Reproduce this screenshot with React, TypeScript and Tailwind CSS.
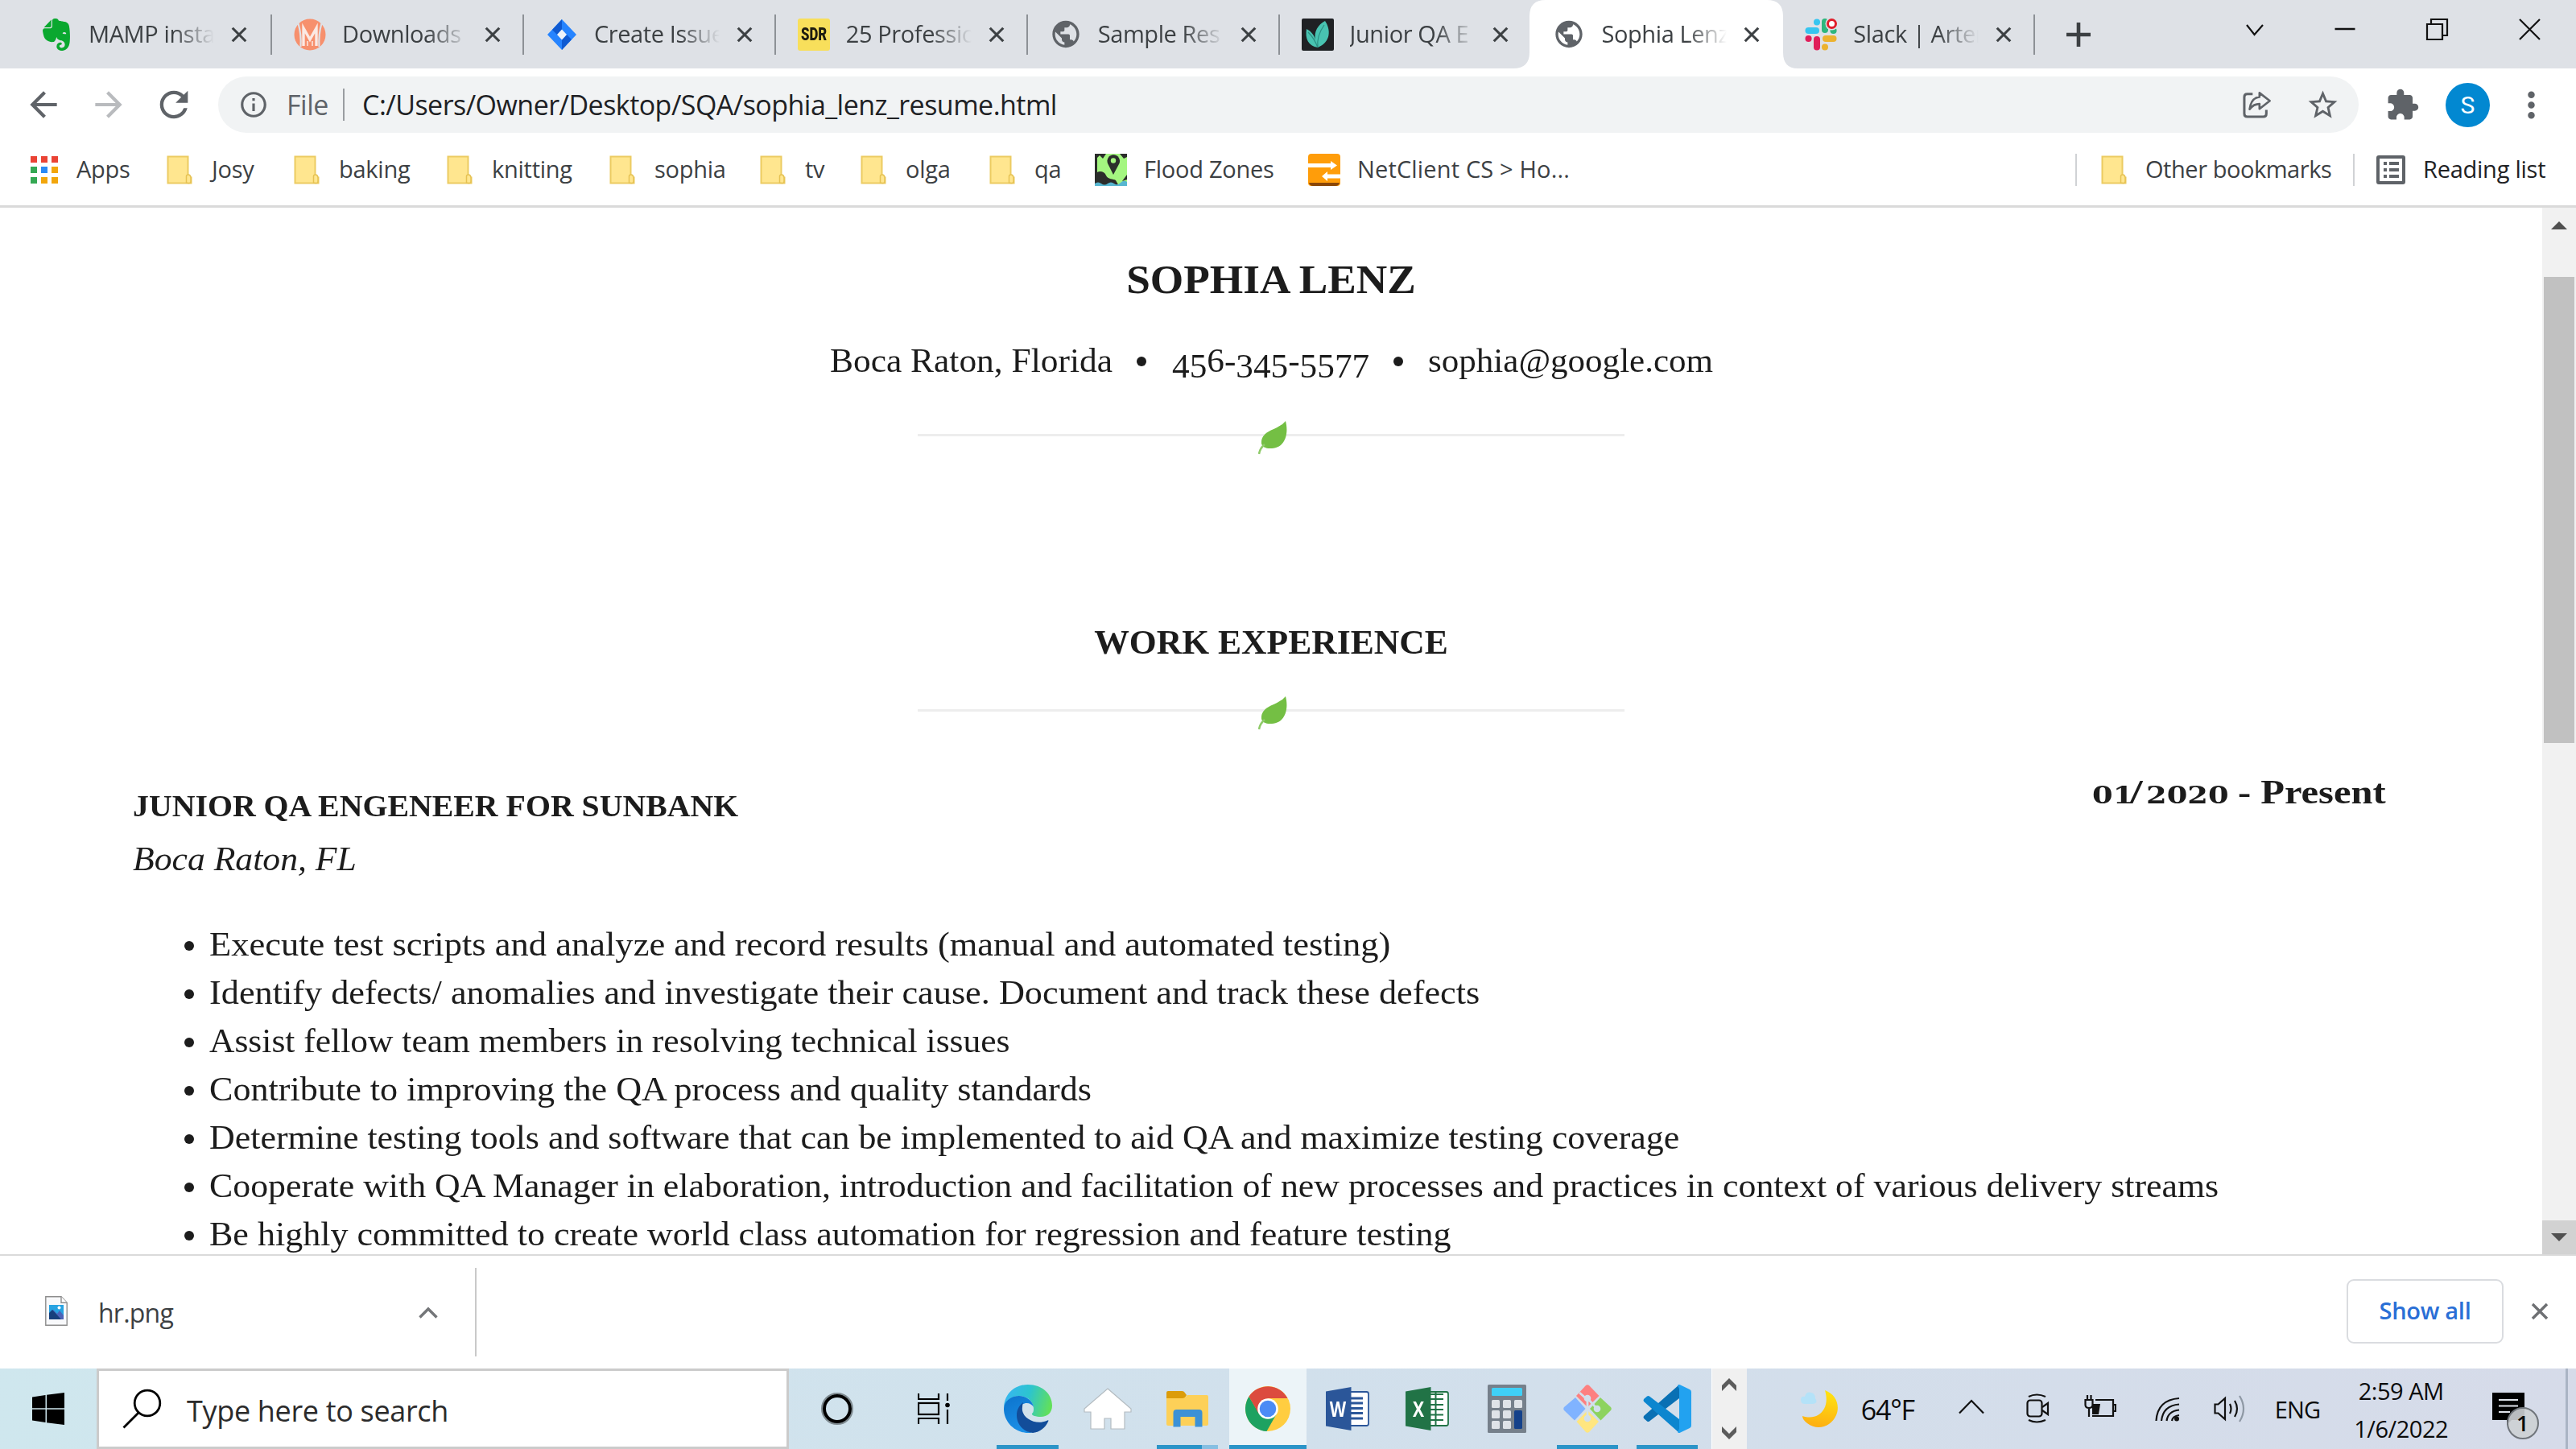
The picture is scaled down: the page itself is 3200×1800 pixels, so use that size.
import type { ReactNode } from 'react';
import {
  MdArrowBack,
  MdArrowForward,
  MdExtension,
  MdInfoOutline,
  MdMoreVert,
  MdPublic,
  MdRefresh,
  MdStarBorder,
} from 'react-icons/md';
import { SiEvernote } from 'react-icons/si';

function Cross({ className }: { className: string }) {
  return (
    <svg className={className} viewBox="0 0 24 24" fill="none" stroke="currentColor" strokeWidth="3.400">
      <path d="M3 3l18 18M21 3L3 21" />
    </svg>
  );
}

/* ---------- Tab favicons ---------- */

function MagentoIcon() {
  return (
    <svg className="size-10" viewBox="0 0 40 40">
      <circle cx="20" cy="20" r="19.5" fill="#f7906d" />
      <path d="M5.500 6q4 14 3 29M34.500 6q-4 14-3 29" stroke="#dee1e6" strokeWidth="2.200" fill="none" />
      <path d="M12 34V12l8 14 8-14v22" stroke="#fbe9e3" strokeWidth="3.400" fill="none" />
      <path d="M17 34v-6M23 34v-6" stroke="#fbe9e3" strokeWidth="1.500" fill="none" />
    </svg>
  );
}

function JiraIcon() {
  return (
    <svg className="size-10" viewBox="0 0 40 40">
      <path d="M20 1L38 20 20 39 2 20z" fill="#2684ff" />
      <path d="M20 1v13l-6 6-6-6z" fill="#0f5ad1" />
      <path d="M20 39V26l6-6 6 6z" fill="#0f5ad1" />
      <path d="M20 13.500l6 6.500-6 6.500-6-6.500z" fill="#eef3fa" />
    </svg>
  );
}

function SdrIcon() {
  return (
    <div className="flex size-10 items-center justify-center rounded-[3px] bg-[#f8df5b]">
      <span className="scale-x-[.76] font-['Roboto',sans-serif] text-[22px] leading-none font-black text-[#1f1d10]">SDR</span>
    </div>
  );
}

function LeafIcon() {
  return (
    <svg className="size-10" viewBox="0 0 40 40">
      <rect width="40" height="40" rx="2" fill="#1f2124" />
      <path d="M20 36C8 34 4 25 6 13c6 3 10 8 11 14C15 16 20 8 29 3c7 10 8 26-9 33z" fill="#48c3b1" />
      <path d="M20 36c-1-8 1-18 8-28M20 36C17 28 13 22 8 17" stroke="#2c8f83" strokeWidth="1.200" fill="none" />
    </svg>
  );
}

function SlackIcon() {
  return (
    <svg className="size-10" viewBox="0 0 40 40">
      <g strokeWidth="8" strokeLinecap="round">
        <path d="M4.500 15H14" stroke="#36c5f0" />
        <path d="M15 4.500v0.100" stroke="#36c5f0" />
        <path d="M25 4v10" stroke="#2eb67d" />
        <path d="M35.500 15h0.100" stroke="#2eb67d" />
        <path d="M15 26v9.500" stroke="#e01e5a" />
        <path d="M4.500 25h0.100" stroke="#e01e5a" />
        <path d="M26 25h9.500" stroke="#ecb22e" />
        <path d="M25 35.500v0.100" stroke="#ecb22e" />
      </g>
      <circle cx="33.500" cy="6.500" r="8" fill="#dee1e6" />
      <circle cx="33.500" cy="6.500" r="5" fill="#fff" stroke="#e01e2a" strokeWidth="3" />
    </svg>
  );
}

/* ---------- Bookmark icons ---------- */

function FolderIcon() {
  return (
    <svg className="h-9 w-8" viewBox="0 0 32 36">
      <path d="M1.500 1.500h25v26h4v7h-29z" fill="#ffe68f" stroke="#eccb62" strokeWidth="2" />
      <path d="M24.500 34V26q0-2 2.500-2t3 3.500v5q0 2-2.500 2z" fill="#ffe68f" stroke="#e6c253" strokeWidth="1.500" />
    </svg>
  );
}

const appColors = [
  'bg-[#ea4335]', 'bg-[#ea4335]', 'bg-[#ea4335]',
  'bg-[#34a853]', 'bg-[#2b8af5]', 'bg-[#f2a60c]',
  'bg-[#34a853]', 'bg-[#f2a60c]', 'bg-[#f2a60c]',
];

function AppsIcon() {
  return (
    <div className="grid w-[34px] grid-cols-3 gap-[5px]">
      {appColors.map((c, i) => (
        <span key={i} className={`h-2 ${c}`} />
      ))}
    </div>
  );
}

function FloodIcon() {
  return (
    <svg className="size-10" viewBox="0 0 40 40">
      <rect width="40" height="40" fill="#a4f680" />
      <path d="M0 0h14l-4 6-4-4-6 6zM40 0h-9l5 6 4-2z" fill="#2b2d2b" />
      <path d="M0 26c3-6 12-5 14 1 2 5 9 4 12 6l4 7H0z" fill="#2b2d2b" />
      <path d="M0 4l3-2v26H0zM40 14v12l-6 8 6-2z" fill="#2b2d2b" />
      <path d="M0 40v-3q4-3 8 0t8 0 8 0 8-1 8-1v5z" fill="#57b6d0" />
      <path d="M23 26L16 12a7.800 7.800 0 1 1 14.500 0z" fill="#2b2d2b" />
      <circle cx="23" cy="8.500" r="3.200" fill="#a4f680" />
    </svg>
  );
}

function NetClientIcon() {
  return (
    <svg className="size-10" viewBox="0 0 40 40">
      <rect width="40" height="40" rx="4" fill="#ff9d0a" />
      <path d="M1 36h38q-1 4-5 4H6q-4 0-5-4z" fill="#8a4607" />
      <path d="M0 12h28V9l8 5.500-8 5.500v-3H0z" fill="#fff" />
      <path d="M40 25.500H24V22l-7 6 7 6v-3.500h16z" fill="#fff" />
    </svg>
  );
}

function ReadingListIcon() {
  return (
    <svg className="size-9" viewBox="0 0 36 36" fill="none" stroke="#5f6368">
      <rect x="2" y="2" width="32" height="32" rx="1" strokeWidth="4" />
      <path d="M9 10h4M9 18h4M9 26h4M16 10h12M16 18h12M16 26h12" strokeWidth="4" />
    </svg>
  );
}

/* ---------- Tab strip ---------- */

const tabs: { title: string; icon: ReactNode; active?: boolean; nextActive?: boolean }[] = [
  { title: 'MAMP insta', icon: <SiEvernote className="size-10 text-[#0aa82f]" /> },
  { title: 'Downloads', icon: <MagentoIcon /> },
  { title: 'Create Issue', icon: <JiraIcon /> },
  { title: '25 Professio', icon: <SdrIcon /> },
  { title: 'Sample Res', icon: <MdPublic className="size-[43px] text-[#5f6368]" /> },
  { title: 'Junior QA E', icon: <LeafIcon />, nextActive: true },
  { title: 'Sophia Lenz', icon: <MdPublic className="size-[43px] text-[#5f6368]" />, active: true },
  { title: 'Slack | Arten', icon: <SlackIcon /> },
];

function TabStrip() {
  return (
    <div className="flex h-[85px] bg-[#dee1e6] pl-6 text-[#3c4043]">
      {tabs.map((t) => (
        <div key={t.title} className="relative flex h-full w-[312.900px] items-center pl-[26px] first:w-[315px]">
          {t.active && (
            <svg className="absolute top-0 -left-[23px] h-[85px] w-[353px]" viewBox="0 0 353 85">
              <path d="M0 85Q20 85 20 65V20Q20 0 40 0H315Q335 0 335 20V65Q335 85 353 85z" fill="#fff" />
            </svg>
          )}
          <div className="relative flex size-10 shrink-0 items-center justify-center">{t.icon}</div>
          <div className="relative mb-px ml-5 w-[156px] overflow-hidden text-[29px] leading-[40px] tracking-[-0.4px] whitespace-nowrap [mask-image:linear-gradient(to_right,black_68%,transparent_100%)]">
            {t.title}
          </div>
          <Cross className="relative ml-5 size-[22px] shrink-0" />
          {!t.active && !t.nextActive && <span className="mr-px ml-auto h-[50px] w-0.5 bg-[#8d9196]" />}
        </div>
      ))}
      <div className="flex w-[105px] items-center justify-center">
        <svg className="size-[30px]" viewBox="0 0 30 30" stroke="currentColor" strokeWidth="4.600">
          <path d="M15 0v30M0 15h30" />
        </svg>
      </div>
      <svg className="ml-auto h-[74px] w-[410px]" viewBox="0 0 410 74" fill="none" stroke="#111" strokeWidth="2.200">
        <path d="M1 31l9.500 12L21 31" />
        <path d="M110.500 36h25" strokeWidth="2.500" />
        <path d="M225 30h19v19h-19zM230 29v-5h20v20h-5" />
        <path d="M340 24l25 25M365 24l-25 25" />
      </svg>
    </div>
  );
}

/* ---------- Address bar ---------- */

function Toolbar() {
  return (
    <div className="flex h-[90px] items-center text-[#5f6368]">
      <MdArrowBack className="ml-[29px] size-[50px]" />
      <MdArrowForward className="ml-[31px] size-[50px] text-[#b9bbbe]" />
      <MdRefresh className="ml-[30px] size-[52px]" />
      <div className="ml-[29px] flex h-[70px] w-[2659px] items-center rounded-full bg-[#f1f3f4] pl-[25px]">
        <MdInfoOutline className="size-[38px]" />
        <span className="ml-[22px] w-[70px] text-[34px] tracking-[-0.5px]">File</span>
        <span className="h-10 w-0.5 bg-[#9a9da1]" />
        <span className="ml-[22px] text-[34px] tracking-[-0.54px] text-[#202124]">
          C:/Users/Owner/Desktop/SQA/sophia_lenz_resume.html
        </span>
        <svg className="ml-auto h-[34px] w-[36px]" viewBox="0 0 38 36" fill="none" stroke="#5f6368" strokeWidth="3.200">
          <path d="M13 4H6q-4 0-4 4v22q0 4 4 4h21q4 0 4-4v-5" />
          <path d="M22 2.500L35.500 13 22 23.500V17q-8 0-13 7 2-15 13-16z" strokeLinejoin="round" strokeWidth="2.800" />
        </svg>
        <MdStarBorder className="mr-[23px] ml-[42px] size-[43px]" />
      </div>
      <MdExtension className="ml-[33px] size-[43px]" />
      <span className="ml-[32px] flex size-[55px] items-center justify-center rounded-full bg-[#0288d1] font-['Roboto',sans-serif] text-[30px] text-white">
        S
      </span>
      <MdMoreVert className="ml-[26px] size-[51px]" />
    </div>
  );
}

/* ---------- Bookmarks bar ---------- */

const bookmarks: { label: string; width: string; icon: ReactNode; slot?: string }[] = [
  { label: 'Apps', width: 'w-[169px]', icon: <AppsIcon />, slot: 'w-[57px]' },
  { label: 'Josy', width: 'w-[158px]', icon: <FolderIcon /> },
  { label: 'baking', width: 'w-[190px]', icon: <FolderIcon /> },
  { label: 'knitting', width: 'w-[202px]', icon: <FolderIcon /> },
  { label: 'sophia', width: 'w-[187px]', icon: <FolderIcon /> },
  { label: 'tv', width: 'w-[125px]', icon: <FolderIcon /> },
  { label: 'olga', width: 'w-[160px]', icon: <FolderIcon /> },
  { label: 'qa', width: 'w-[131px]', icon: <FolderIcon /> },
  { label: 'Flood Zones', width: 'w-[265px]', icon: <FloodIcon />, slot: 'w-[61px]' },
  { label: 'NetClient CS > Ho...', width: 'w-[340px] tracking-[0.16px]', icon: <NetClientIcon />, slot: 'w-[61px]' },
];

function BookmarksBar() {
  return (
    <div className="flex h-[83px] items-center border-b-[3px] border-[#dadada] pb-[9px] pl-[38px] text-[29px] leading-[40px] tracking-[-0.25px] whitespace-nowrap text-[#3c4043]">
      {bookmarks.map((b) => (
        <div key={b.label} className={`flex items-center ${b.width}`}>
          <span className={`shrink-0 ${b.slot ?? 'w-14'}`}>{b.icon}</span>
          <span className="-mt-0.5">{b.label}</span>
        </div>
      ))}
      <div className="ml-auto flex h-10 items-center">
        <span className="h-10 w-0.5 bg-[#d0d2d5]" />
        <span className="ml-[30px] w-[55px]"><FolderIcon /></span>
        <span className="-mt-0.5 w-[258px] tracking-[-0.45px]">Other bookmarks</span>
        <span className="h-10 w-0.5 bg-[#d0d2d5]" />
        <span className="ml-[27px] w-[58px]"><ReadingListIcon /></span>
        <span className="-mt-0.5 w-[190px] text-[#202124]">Reading list</span>
      </div>
    </div>
  );
}

/* ---------- Résumé page ---------- */

function LeafDivider() {
  return (
    <div className="mx-auto flex h-[43px] w-[878px] items-start">
      <span className="mt-[17px] h-[3px] flex-1 bg-[#ededed]" />
      <svg className="h-[43px] w-9 shrink-0" viewBox="0 0 36 43">
        <path d="M0 18.500h36" stroke="#ededed" strokeWidth="3" />
        <path d="M34 1C38 16 34 34 17 35 9 35.500 5 33 4 29 3 15 19 12 25 8q6-3 9-7z" fill="#74bf44" />
        <path d="M1 42q1-7 7-12" stroke="#8fcb69" strokeWidth="2.500" fill="none" />
      </svg>
      <span className="mt-[17px] h-[3px] w-[419px] bg-[#ededed]" />
    </div>
  );
}

/** Digits that hang below the baseline, as text figures do. */
function Low({ children }: { children: string }) {
  return <span className="align-[-0.16em] leading-[0]">{children}</span>;
}

const duties = [
  { text: 'Execute test scripts and analyze and record results (manual and automated testing)', stretch: 'scale-x-[1.06]' },
  { text: 'Identify defects/ anomalies and investigate their cause. Document and track these defects', stretch: 'scale-x-[1.054]' },
  { text: 'Assist fellow team members in resolving technical issues', stretch: 'scale-x-[1.036]' },
  { text: 'Contribute to improving the QA process and quality standards', stretch: 'scale-x-[1.051]' },
  { text: 'Determine testing tools and software that can be implemented to aid QA and maximize testing coverage', stretch: 'scale-x-[1.046]' },
  { text: 'Cooperate with QA Manager in elaboration, introduction and facilitation of new processes and practices in context of various delivery streams', stretch: 'scale-x-[1.044]' },
  { text: 'Be highly committed to create world class automation for regression and feature testing', stretch: 'scale-x-[1.048]' },
];

function Resume() {
  return (
    <main className="h-[1300px] flex-1 overflow-hidden bg-white pt-[59px] font-['Liberation_Serif',serif] text-[42px] leading-[60px] whitespace-nowrap text-[#1c1c1c]">
      <h1 className="scale-x-[1.065] text-center text-[50px] font-bold">SOPHIA LENZ</h1>
      <p className="mt-[41px] flex items-center pl-[1031px]">
        <span className="flex w-[381px]"><span className="origin-left scale-x-[1.034]">Boca Raton, Florida</span></span>
        <span className="mt-0.5 size-3 rounded-full bg-[#1c1c1c]" />
        <span className="ml-[32px] flex w-[275px]">
          <span className="origin-left scale-x-[1.03]">
            <Low>45</Low>6-<Low>345</Low>-<Low>5577</Low>
          </span>
        </span>
        <span className="mt-0.5 size-3 rounded-full bg-[#1c1c1c]" />
        <span className="ml-[31px] origin-left scale-x-[1.025]">sophia@google.com</span>
      </p>
      <div className="mt-[44px]"><LeafDivider /></div>
      <h2 className="mt-[203px] scale-x-[1.038] text-center font-bold">WORK EXPERIENCE</h2>
      <div className="mt-[36px]"><LeafDivider /></div>
      <section className="mt-[46px] pl-[165px]">
        <header className="flex justify-between pr-[193px]">
          <div className="pt-[18px]">
            <h3 className="origin-left scale-x-[1.048] text-[38px] font-bold">JUNIOR QA ENGENEER FOR SUNBANK</h3>
            <p className="mt-1.5 flex italic"><span className="origin-left scale-x-[1.04]">Boca Raton, FL</span></p>
          </div>
          <p className="mt-px flex h-[60px] w-[366px] items-baseline font-bold">
            <span className="w-[47px] origin-left scale-x-[1.27] font-['DejaVu_Serif',serif] text-[29px]">01</span>
            <span className="w-[20px] origin-left scale-x-[1.35]">/</span>
            <span className="w-[114px] origin-left scale-x-[1.27] font-['DejaVu_Serif',serif] text-[29px]">2020</span>
            <span className="origin-left scale-x-[1.155]">- Present</span>
          </p>
        </header>
        <ul className="mt-[46px]">
          {duties.map((d) => (
            <li key={d.text} className="flex h-[60px] items-center">
              <span className="mt-[3px] ml-[64px] size-3 rounded-full bg-[#1c1c1c]" />
              <span className={`ml-[19px] origin-left ${d.stretch}`}>{d.text}</span>
            </li>
          ))}
        </ul>
      </section>
    </main>
  );
}

function Scrollbar() {
  return (
    <aside className="flex h-[1300px] w-[42px] flex-col items-center bg-[#f1f1f1]">
      <svg className="mt-[17px] h-2.5 w-5" viewBox="0 0 20 10"><path d="M0 10L10 0l10 10z" fill="#505050" /></svg>
      <span className="mt-[59px] h-[579px] w-[38px] bg-[#c1c1c1]" />
      <span className="mt-auto flex h-[42px] w-full items-center justify-center bg-[#d2d2d2]">
        <svg className="h-2.5 w-5" viewBox="0 0 20 10"><path d="M0 0l10 10L20 0z" fill="#505050" /></svg>
      </span>
    </aside>
  );
}

/* ---------- Download shelf ---------- */

function DownloadShelf() {
  return (
    <div className="flex h-[142px] items-center border-t-2 border-[#dadada] bg-white text-[#3c4043]">
      <svg className="mb-1 ml-14 h-[37px] w-7" viewBox="0 0 28 37">
        <path d="M.8.8H20l7.200 7.500V36.200H.8z" fill="#f8f9fb" stroke="#8d8d8d" strokeWidth="1.400" />
        <path d="M20 .8v7.500h7.200" fill="#fff" stroke="#8d8d8d" strokeWidth="1.400" />
        <rect x="5" y="11" width="18" height="18" fill="#27a3e2" />
        <path d="M5 22l5-5 5 5 3-4 5 6v5H5z" fill="#4c63b8" />
        <path d="M5 21l4-4 11 12H5z" fill="#173f7c" />
        <circle cx="17.500" cy="14.500" r="2" fill="#fff" />
      </svg>
      <span className="mt-0.5 ml-[38px] w-[398px] text-[32px] tracking-[-0.78px]">hr.png</span>
      <svg className="h-[15px] w-6" viewBox="0 0 24 15" fill="none" stroke="#747679" strokeWidth="3.400">
        <path d="M1.500 13.500L12 3l10.500 10.500" />
      </svg>
      <span className="ml-[46px] h-[110px] w-0.5 bg-[#c9c9c9]" />
      <span className="mb-[3px] ml-auto flex h-20 w-[195px] items-center justify-center rounded-[9px] border-2 border-[#dadce0] pb-0.5 text-[29px] font-semibold tracking-[-0.28px] text-[#2a6fd6]">
        Show all
      </span>
      <Cross className="mr-[33px] mb-0.5 ml-[33px] size-6 text-[#6e7073]" />
    </div>
  );
}

/* ---------- Taskbar ---------- */

function EdgeIcon() {
  return (
    <svg className="size-[60px]" viewBox="0 0 60 60">
      <defs>
        <linearGradient id="edgeTop" x1="0" y1="0.300" x2="1" y2="0.500">
          <stop offset="0" stopColor="#37b6f2" />
          <stop offset=".5" stopColor="#2cc4cf" />
          <stop offset="1" stopColor="#62e05a" />
        </linearGradient>
        <linearGradient id="edgeLeft" x1="0" y1="0" x2="0.400" y2="1">
          <stop offset="0" stopColor="#0c73cc" />
          <stop offset="1" stopColor="#1b8fe6" />
        </linearGradient>
      </defs>
      <path d="M0 30C0 12 13 0 30 0c18 0 30 12 30 26 0 9-6 14-14 14-7 0-12-2-11-4 1-1 2-2 2-6C37 20 28 14 19 14 8 14 0 22 0 30z" fill="url(#edgeTop)" />
      <path d="M0 30c0-9 8-16 19-16 9 0 17 6 18 14-3-6-14-8-18 2-4 12 4 26 16 30C16 62 0 48 0 30z" fill="url(#edgeLeft)" />
      <path d="M24 22c-5 4-8 9-8 16 0 12 9 21 20 22 9-1 16-7 19-14 1-2 0-2-2-1-14 6-32-4-30-17 0-2 .4-4 1-6z" fill="#124d9a" />
    </svg>
  );
}

function HomeIcon() {
  return (
    <svg className="h-[53px] w-[60px]" viewBox="0 0 60 53">
      <path d="M30 1L59 26v4h-8v21H34V38h-8v13H9V30H1v-4z" fill="#fff" stroke="#b4bcc1" strokeWidth="1.200" />
    </svg>
  );
}

function ExplorerIcon() {
  return (
    <svg className="h-[45px] w-[54px]" viewBox="0 0 54 45">
      <path d="M1 2q0-2 2-2h17q2 0 3 1l3 4-3 5H1z" fill="#dc9c0a" />
      <path d="M1 9h20q2 0 4-2l2-2h24q2 0 2 2v34q0 2-2 2H3q-2 0-2-2z" fill="#fdd058" />
      <path d="M9.500 44.500V27q0-4 4-4h28q4 0 4 4v17.500H36.500V32h-18v12.500z" fill="#3c91d6" />
    </svg>
  );
}

function ChromeIcon() {
  return (
    <svg className="size-14" viewBox="0 0 56 56">
      <circle cx="28" cy="28" r="28" fill="#ffcd40" />
      <path d="M4.500 12.800A28 28 0 0 0 26.500 56L39 34 28 28 17 34z" fill="#1da261" />
      <path d="M4.500 12.800L16 33 28 15h24.500A28 28 0 0 0 4.500 12.800z" fill="#dc4b3e" />
      <circle cx="28" cy="28" r="12.800" fill="#fff" />
      <circle cx="28" cy="28" r="10.300" fill="#4c8bf5" />
    </svg>
  );
}

function OfficeIcon({ letter, dark, children }: { letter: string; dark: string; children: ReactNode }) {
  return (
    <div className="relative size-[54px]">
      <svg className="size-[54px]" viewBox="0 0 54 54">
        <rect x="28" y="6" width="25" height="42" rx="2.500" fill="#fff" stroke={dark} strokeWidth="1.800" />
        {children}
        <path d="M0 5.500L31.500 0v54L0 48.500z" fill={dark} />
      </svg>
      <span className="absolute inset-y-0 left-0 flex w-[31px] items-center justify-center font-['Open_Sans',sans-serif] text-[27px] font-bold text-white">
        <span className="scale-x-[.78]">{letter}</span>
      </span>
    </div>
  );
}

function CalculatorIcon() {
  return (
    <svg className="h-[60px] w-12" viewBox="0 0 48 60">
      <rect width="48" height="60" rx="1.500" fill="#76808b" />
      <rect x="5" y="4" width="38" height="10" rx="1.500" fill="#3fd0f7" />
      <g fill="#dfe3e8">
        <rect x="5" y="19" width="10" height="10" rx="1.500" />
        <rect x="19" y="19" width="10" height="10" rx="1.500" />
        <rect x="33" y="19" width="10" height="10" rx="1.500" />
        <rect x="5" y="32" width="10" height="10" rx="1.500" />
        <rect x="19" y="32" width="10" height="10" rx="1.500" />
        <rect x="5" y="45" width="10" height="10" rx="1.500" />
        <rect x="19" y="45" width="10" height="10" rx="1.500" />
      </g>
      <rect x="33" y="32" width="10" height="23" rx="1.500" fill="#14418a" />
    </svg>
  );
}

function GitIcon() {
  return (
    <svg className="size-[60px]" viewBox="0 0 60 60">
      <path d="M28 1q2-1.500 4 0l12.500 13-14.500 14-14-14z" fill="#fd8080" />
      <path d="M15 16L1 28q-1.500 2 0 4l13 12.500L27.500 30z" fill="#80b3ff" />
      <path d="M46 16L33 30l13.500 14.500L59 32q1.500-2 0-4z" fill="#8dd35f" />
      <path d="M30 32L16.500 46 28 59q2 1.500 4 0l12-13z" fill="#ffe680" />
      <path d="M20 10l8 7M30 17v24M30 17l11 12" stroke="#d1e0ec" strokeWidth="2.800" />
      <g fill="#d1e0ec">
        <circle cx="30" cy="17" r="4.300" />
        <circle cx="42" cy="30" r="4.300" />
        <circle cx="30" cy="42" r="4.300" />
      </g>
    </svg>
  );
}

function VsCodeIcon() {
  return (
    <svg className="size-[60px]" viewBox="0 0 60 60">
      <path d="M45 0L1 39q-1 1.500 0 3l4 3.500q1.500 1 3 0L45 17z" fill="#0970b4" />
      <path d="M45 60L1 21q-1-1.500 0-3l4-3.500q1.500-1 3 0L45 43z" fill="#0c86cf" />
      <path d="M43 1q1-1.500 3-.8L58 6q2 1 2 3v42q0 2-2 3l-12 5.800q-2 .7-3-.8l2-4V5z" fill="#22a2f0" />
    </svg>
  );
}

const apps: { name: string; icon: ReactNode; bar?: string; active?: boolean; partial?: boolean }[] = [
  { name: 'edge', icon: <EdgeIcon />, bar: 'w-[77px]' },
  { name: 'home', icon: <HomeIcon /> },
  { name: 'explorer', icon: <ExplorerIcon />, bar: 'w-[76px]', partial: true },
  { name: 'chrome', icon: <ChromeIcon />, bar: 'w-24', active: true },
  {
    name: 'word',
    icon: (
      <OfficeIcon letter="W" dark="#2b5699">
        <path d="M31 14h15M31 20h15M31 26.500h15M31 32.500h15M31 39h15" stroke="#2b5699" strokeWidth="2.800" />
      </OfficeIcon>
    ),
  },
  {
    name: 'excel',
    icon: (
      <OfficeIcon letter="X" dark="#217346">
        <path d="M31 9h19M31 15h19M31 22h19M31 28h19M31 34.500h19M31 41h19" stroke="#217346" strokeWidth="1.800" />
        <path d="M37.500 7v40" stroke="#217346" strokeWidth="2" />
        <path d="M49 8v38" stroke="#fff" strokeWidth="4" />
      </OfficeIcon>
    ),
  },
  { name: 'calculator', icon: <CalculatorIcon /> },
  { name: 'git', icon: <GitIcon />, bar: 'w-[76px]' },
  { name: 'code', icon: <VsCodeIcon />, bar: 'w-[76px]' },
];

function Tray() {
  return (
    <div className="flex h-full flex-1 items-center text-[#0b0b0b]">
      <svg className="ml-[66px] h-12 w-12" viewBox="0 0 48 48">
        <defs>
          <linearGradient id="moon" x1="0.600" y1="0" x2="0.400" y2="1">
            <stop offset="0" stopColor="#ffe312" />
            <stop offset="1" stopColor="#fdae12" />
          </linearGradient>
        </defs>
        <path d="M31 1C45 6 50 20 45 32 39 46 22 52 9 42 5 39 3 36 3 33c12 4 22 0 27-9 4-8 3-16 1-23z" fill="url(#moon)" />
        <path d="M6 18q-5 0-5-5t5-4q2-7 8-5 5 1 5 7 4 6-3 7z" fill="#b4e2f8" />
      </svg>
      <span className="mt-0.5 ml-[28px] w-[121px] text-[34px] tracking-[-1.200px]">64°F</span>
      <svg className="mb-1.5 h-[19px] w-8" viewBox="0 0 32 19" fill="none" stroke="#111" strokeWidth="2.200">
        <path d="M1 17.500L16 2l15 15.500" />
      </svg>
      <svg className="ml-[52px] h-[38px] w-[30px]" viewBox="0 0 30 38" fill="none" stroke="#111" strokeWidth="2.200">
        <rect x="1.500" y="8.500" width="18" height="20" rx="3.500" />
        <path d="M20 17l7-5v14l-7-5M3 4q10-5 21 0M3 33q10 5 21 0" />
      </svg>
      <svg className="mb-1 ml-[42px] h-[30px] w-10" viewBox="0 0 40 30" fill="none" stroke="#111" strokeWidth="2.200">
        <path d="M14 6h22v20H10" />
        <path d="M36 12h3v8h-3" />
        <path d="M10 11h10l-2 13h-8z" fill="#111" stroke="none" />
        <path d="M1.500 6h9v6q0 4-4.500 4t-4.500-4zM4 6V0M8.500 6V0M6 16v11" />
      </svg>
      <svg className="ml-[48px] h-[31px] w-[31px]" viewBox="0 0 31 31" fill="none" stroke="#111" strokeWidth="2.200">
        <path d="M1.500 30Q3 4 30 2M8 30Q10 11 30 9.500M14.500 30Q16 18 30 16.500M21 30q1-6 9-7" />
        <circle cx="27" cy="27.500" r="3" fill="#111" stroke="none" />
      </svg>
      <svg className="ml-[42px] h-[36px] w-10" viewBox="0 0 40 36" fill="none" stroke="#111" strokeWidth="2.200">
        <path d="M1.500 12.500h4L14 5v26l-8.500-7.500h-4z" />
        <path d="M20 12q3 6 0 12M26 8q6 10 0 20" />
        <path d="M32 2q10 16 0 32" stroke="#8e98a4" />
      </svg>
      <span className="mt-0.5 ml-[36px] w-[78px] text-[29px] tracking-[-0.8px]">ENG</span>
      <div className="mt-0.5 w-[158px] text-center text-[29px] leading-[47px] tracking-[-0.5px]">
        <p>2:59 AM</p>
        <p>1/6/2022</p>
      </div>
      <div className="relative ml-[34px] size-[60px]">
        <svg className="size-[60px]" viewBox="0 0 60 60">
          <path d="M0 10h40v34H24l-6 6v-6H0z" fill="#000" />
          <path d="M8 19h24M8 26.500h24M8 34h14" stroke="#dfe3ea" strokeWidth="2" />
        </svg>
        <span className="absolute top-[28px] left-[18px] flex size-10 items-center justify-center rounded-full border-2 border-[#70757b] bg-[#cdd0d4]/90 text-[27px] font-semibold">
          1
        </span>
      </div>
      <span className="ml-auto h-full w-[13px] border-l-[3px] border-[#aab4c4]" />
    </div>
  );
}

function Taskbar() {
  return (
    <div className="flex h-[100px] bg-linear-to-r from-[#cfe7ee] via-[#d1e0ec] to-[#d6dbe9]">
      <div className="flex w-[120px] items-center justify-center">
        <svg className="size-10" viewBox="0 0 40 40">
          <path d="M0 5.500L16.500 3v16.300H0zM18 2.800L40 0v19.300H18zM0 20.800h16.500V37L0 34.500zM18 20.800h22V40l-22-2.800z" fill="#000" />
        </svg>
      </div>
      <div className="flex w-[860px] items-center border-[3px] border-[#cbcbcb] bg-white pl-[29px]">
        <svg className="h-[50px] w-[50px]" viewBox="0 0 50 50" fill="none" stroke="#000" strokeWidth="2.800">
          <circle cx="31" cy="18" r="15.800" />
          <path d="M20.500 29.500L1.500 48.500" />
        </svg>
        <span className="mt-1.5 ml-[30px] text-[36px] tracking-[-0.33px] text-[#2b2b2b]">Type here to search</span>
      </div>
      <div className="flex w-[120px] items-center justify-center">
        <span className="size-10 rounded-full border-2 border-[#7e8a90]">
          <span className="block size-9 rounded-full border-[4.500px] border-black" />
        </span>
      </div>
      <div className="flex w-[127px] items-center pl-10">
        <svg className="size-10" viewBox="0 0 40 40" fill="none" stroke="#000" strokeWidth="2.200">
          <path d="M1 1v7h25V1M1 39v-7h25v7" />
          <rect x="1" y="13" width="25" height="14" />
          <path d="M37 1v9M37 21v18" />
          <circle cx="37" cy="15.500" r="2.800" fill="#000" stroke="none" />
        </svg>
      </div>
      {apps.map((a) => (
        <div key={a.name} className="flex w-[99.300px] justify-center">
          <div className={`relative flex h-full w-24 items-center justify-center ${a.active ? 'bg-[#ecf4f8]' : ''}`}>
            {a.icon}
            {a.bar && (
              <span className={`absolute bottom-0 flex h-[5px] justify-end bg-[#2b94c8] ${a.bar}`}>
                {a.partial && <span className="w-5 bg-[#86bfe2]" />}
              </span>
            )}
          </div>
        </div>
      ))}
      <div className="ml-[5px] flex w-11 flex-col items-center justify-between border-l border-white bg-[#f0f0f0] py-3">
        <svg className="h-4 w-[18px]" viewBox="0 0 18 16"><path d="M0 9L9 0l9 9v7L9 7l-9 9z" fill="#5c5c5c" /></svg>
        <svg className="h-4 w-[18px]" viewBox="0 0 18 16"><path d="M0 7l9 9 9-9V0L9 9 0 0z" fill="#5c5c5c" /></svg>
      </div>
      <Tray />
    </div>
  );
}

export default function App() {
  return (
    <div className="flex h-[1800px] w-[3200px] flex-col overflow-hidden bg-white font-['Open_Sans',sans-serif]">
      <TabStrip />
      <Toolbar />
      <BookmarksBar />
      <div className="flex">
        <Resume />
        <Scrollbar />
      </div>
      <DownloadShelf />
      <Taskbar />
    </div>
  );
}
